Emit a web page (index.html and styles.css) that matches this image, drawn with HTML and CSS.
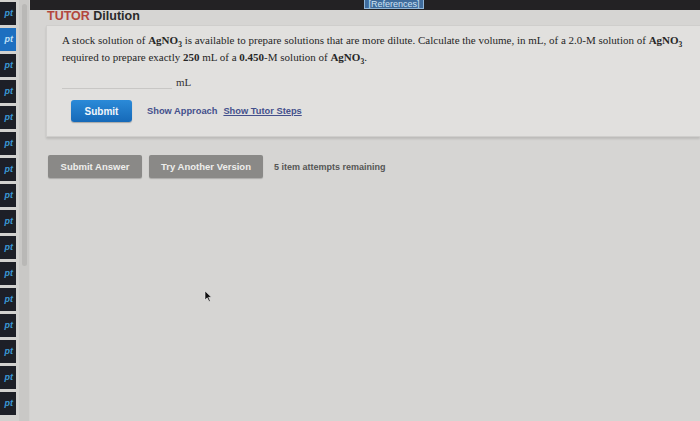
FILE: index.html
```html
<!DOCTYPE html>
<html lang="en">
<head>
    <meta charset="UTF-8">
    <meta name="viewport" content="width=device-width, initial-scale=1.0">
    <title>TUTOR Dilution</title>
    <link rel="stylesheet" href="styles.css">
</head>
<body>
    <div class="page">
        <aside class="side">
            <div class="tabs">
                <div class="tab">pt</div>
                <div class="tab active">pt</div>
                <div class="tab">pt</div>
                <div class="tab">pt</div>
                <div class="tab">pt</div>
                <div class="tab">pt</div>
                <div class="tab">pt</div>
                <div class="tab">pt</div>
                <div class="tab">pt</div>
                <div class="tab">pt</div>
                <div class="tab">pt</div>
                <div class="tab">pt</div>
                <div class="tab">pt</div>
                <div class="tab">pt</div>
                <div class="tab">pt</div>
                <div class="tab">pt</div>
            </div>
            <div class="track"><div class="thumb"></div></div>
        </aside>

        <main class="main">
            <div class="topbar">
                <span class="ref-btn">[References]</span>
            </div>

            <div class="content">
                <h1 class="title"><span class="tutor">TUTOR</span> Dilution</h1>

                <div class="card">
                    <p class="question">
                        A stock solution of <b>AgNO<sub>3</sub></b> is available to prepare solutions that are more dilute. Calculate the volume, in mL, of a 2.0-M solution of <b>AgNO<sub>3</sub></b>
                        required to prepare exactly <b>250</b> mL of a <b>0.450</b>-M solution of <b>AgNO<sub>3</sub></b>.
                    </p>

                    <div class="answer-row">
                        <span class="answer-input"></span>
                        <span class="unit">mL</span>
                    </div>

                    <div class="action-row">
                        <button class="submit">Submit</button>
                        <a class="link">Show Approach</a>
                        <a class="link underline">Show Tutor Steps</a>
                    </div>
                </div>

                <div class="footer-row">
                    <button class="gray-btn answer">Submit Answer</button>
                    <button class="gray-btn version">Try Another Version</button>
                    <span class="attempts">5 item attempts remaining</span>
                </div>
            </div>
        </main>
    </div>

    <svg class="cursor" width="8" height="12" viewBox="0 0 8 12">
        <path d="M1 1 L1 10 L3.2 7.8 L5 11.5 L6.3 10.9 L4.6 7.3 L7.5 7.3 Z" fill="#111" stroke="#eee" stroke-width="0.6"/>
    </svg>
</body>
</html>
```

FILE: styles.css
```css
body {
    margin: 0;
    background-color: #d6d5d3;
    font-family: 'Liberation Sans', Arial, sans-serif;
    color: #222;
    overflow: hidden;
}

.page {
    display: flex;
    height: 421px;
}

/* left question list */
.side {
    display: flex;
    width: 30px;
    flex-shrink: 0;
    background: #d2d1cf;
}

.tabs {
    display: flex;
    flex-direction: column;
    gap: 3px;
    width: 16px;
    margin-top: 2px;
    overflow: hidden;
}

.tab {
    height: 23px;
    flex-shrink: 0;
    background: #1d1f27;
    color: #3b9ad8;
    font-size: 9px;
    font-weight: bold;
    font-style: italic;
    line-height: 23px;
    text-align: right;
    padding-right: 3px;
}

.tab.active {
    background: #1d6fc0;
    color: #bfe0f7;
}

.track {
    width: 10px;
    margin-left: 3px;
    background: #c9c8c6;
}

.thumb {
    width: 5px;
    height: 262px;
    margin: 4px 0 0 3px;
    background: #b9b8b6;
    border-radius: 3px;
}

/* main column */
.main {
    flex: 1;
    display: flex;
    flex-direction: column;
}

.topbar {
    height: 10px;
    background: #232224;
    display: flex;
    justify-content: center;
}

.ref-btn {
    height: 8px;
    line-height: 8px;
    padding: 0 3px;
    font-size: 9px;
    color: #cfe3f4;
    background: #3f6c9c;
    border: 1px solid #8fb5d8;
    border-top: none;
    margin-left: 58px;
    overflow: hidden;
}

.content {
    padding: 0 0 0 16px;
}

.title {
    margin: 0 0 2px 1px;
    font-size: 12.5px;
    font-weight: bold;
    color: #2a2a2a;
    line-height: 13px;
}

.tutor {
    color: #b3473d;
}

.card {
    background: #e1e0de;
    border: 1px solid #cfcecc;
    border-right: none;
    box-shadow: 0 2px 2px rgba(0, 0, 0, 0.12);
    padding: 6px 0 14px 15px;
}

.question {
    margin: 0;
    font-family: 'Liberation Serif', 'Times New Roman', serif;
    font-size: 11px;
    line-height: 17px;
    color: #262626;
    width: 630px;
}

.question sub {
    font-size: 7.5px;
    line-height: 0;
}

.answer-row {
    display: flex;
    align-items: flex-end;
    margin-top: 6px;
    height: 17px;
}

.answer-input {
    width: 110px;
    height: 15px;
    border-bottom: 1px solid #c8c7c5;
}

.unit {
    font-family: 'Liberation Serif', 'Times New Roman', serif;
    font-size: 11px;
    color: #333;
    margin-left: 4px;
    padding-bottom: 1px;
}

.action-row {
    display: flex;
    align-items: center;
    margin-top: 11px;
    padding-left: 9px;
}

.submit {
    width: 61px;
    height: 22px;
    border: none;
    border-radius: 3px;
    background: linear-gradient(#2b8ad8, #1669b8);
    color: #f2f6fa;
    font-family: 'Liberation Sans', Arial, sans-serif;
    font-size: 10px;
    font-weight: bold;
    box-shadow: 0 1px 1px rgba(0, 0, 0, 0.25);
    margin-right: 15px;
}

.link {
    font-size: 9.3px;
    font-weight: bold;
    color: #44508c;
    margin-right: 6px;
}

.link.underline {
    text-decoration: underline;
}

.footer-row {
    display: flex;
    align-items: center;
    gap: 7px;
    margin-top: 18px;
    padding-left: 2px;
}

.gray-btn {
    height: 23px;
    border: none;
    border-radius: 2px;
    background: #8a8987;
    color: #eeeeec;
    font-family: 'Liberation Sans', Arial, sans-serif;
    font-size: 9.5px;
    font-weight: bold;
    box-shadow: 0 1px 1px rgba(0, 0, 0, 0.2);
}

.gray-btn.answer {
    width: 94px;
}

.gray-btn.version {
    width: 114px;
}

.attempts {
    font-size: 9px;
    font-weight: bold;
    color: #555;
    margin-left: 4px;
}

.cursor {
    position: absolute;
    left: 204px;
    top: 290px;
}
```
